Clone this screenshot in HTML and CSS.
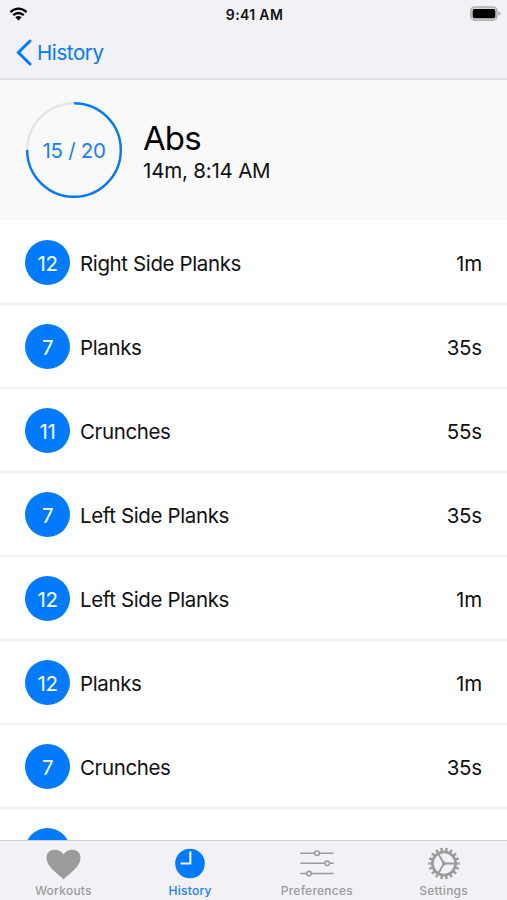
FILE: index.html
```
<!DOCTYPE html>
<html lang="en">
<head>
<meta charset="utf-8">
<title>History</title>
<link rel="stylesheet" href="styles.css">
</head>
<body>
<div class="app">
  <header class="top">
    <div class="status">
      <svg class="wifi" width="20" height="15" viewBox="0 0 20 15" fill="none" stroke="#000" stroke-width="2.3"><path d="M1.4 5.1Q9.5-1.8 17.6 5.1"/><path d="M4.2 8.2Q9.5 3.8 14.8 8.2"/><path d="M6.3 10.2Q9.5 7.6 12.7 10.2L9.5 13.6Z" fill="#000" stroke="none"/></svg>
      <span class="clock">9:41 AM</span>
      <svg class="battery" width="31" height="16" viewBox="0 0 31 16"><rect x=".9" y="1" width="26" height="13.2" rx="4" fill="#d8d8da" stroke="#b0b0b2" stroke-width="1.6"/><rect x="2.7" y="2.9" width="22.6" height="9.4" rx="1.8"/><path d="M28.4 5.3q4.2 2.3 0 4.6z" fill="#a8a8aa"/></svg>
    </div>
    <nav class="nav">
      <svg width="16" height="27" viewBox="0 0 16 27" fill="none" stroke="#007aff" stroke-width="3" stroke-linecap="round"><path d="M14 2L2.400 13.500L14 25"/></svg>
      <span class="back">History</span>
    </nav>
  </header>
  <section class="summary">
    <div class="ring">
      <svg width="98" height="98" viewBox="0 0 98 98" fill="none" stroke-width="2.4"><circle cx="49" cy="49" r="46.8" stroke="#e5e5e6"/><path d="M49 2.2A46.8 46.8 0 1 1 2.2 49" stroke="#007aff"/></svg>
      <span class="count">15 / 20</span>
    </div>
    <div class="heading">
      <h1 class="title">Abs</h1>
      <p class="meta">14m, 8:14 AM</p>
    </div>
  </section>
  <main class="list">
    <div class="row"><span class="badge">12</span><span class="name">Right Side Planks</span><span class="time">1m</span></div>
    <div class="row"><span class="badge">7</span><span class="name">Planks</span><span class="time">35s</span></div>
    <div class="row"><span class="badge">11</span><span class="name">Crunches</span><span class="time">55s</span></div>
    <div class="row"><span class="badge">7</span><span class="name">Left Side Planks</span><span class="time">35s</span></div>
    <div class="row"><span class="badge">12</span><span class="name">Left Side Planks</span><span class="time">1m</span></div>
    <div class="row"><span class="badge">12</span><span class="name">Planks</span><span class="time">1m</span></div>
    <div class="row"><span class="badge">7</span><span class="name">Crunches</span><span class="time">35s</span></div>
    <div class="row"><span class="badge"></span></div>
  </main>
  <footer class="tabs">
    <div class="tab"><svg width="36" height="36" viewBox="0 0 36 36"><path d="M18.500 33.200C12.500 27.500 1.500 21 1.500 11.800C1.500 6.500 5.300 3.700 9.500 3.700C13.500 3.700 16.800 5.500 18.500 8.200C20.200 5.500 23.500 3.700 27.500 3.700C31.700 3.700 35.500 6.500 35.500 11.800C35.500 21 24.500 27.500 18.500 33.200Z" fill="#9b9b9b"/></svg><span>Workouts</span></div>
    <div class="tab active"><svg width="36" height="36" viewBox="0 0 36 36"><circle cx="18" cy="17.500" r="14.800" fill="#007aff"/><path d="M18.300 5.500V17.500H8.500" fill="none" stroke="#f1f1f6" stroke-width="2.200"/></svg><span>History</span></div>
    <div class="tab"><svg width="36" height="36" viewBox="0 0 36 36" fill="none" stroke="#9b9b9b" stroke-width="1.500"><path d="M1.300 7.200H34.700M1.300 17.300H34.700M1.300 27.500H34.700"/><g fill="#f1f1f6"><circle cx="18" cy="7.200" r="2.300"/><circle cx="28.200" cy="17.300" r="2.300"/><circle cx="10" cy="27.500" r="2.300"/></g></svg><span>Preferences</span></div>
    <div class="tab"><svg width="36" height="36" viewBox="0 0 36 36" fill="none" stroke="#9b9b9b"><circle cx="18" cy="17.500" r="14.200" stroke-width="3" pathLength="36" stroke-dasharray="1 1" stroke-dashoffset=".5"/><circle cx="18" cy="17.500" r="11.600" stroke-width="2.700"/><path d="M18 17.500H29M18 17.500L12.500 8M18 17.500L12.500 27" stroke-width="1.900"/><circle cx="18" cy="17.500" r="2" fill="#9b9b9b" stroke="none"/></svg><span>Settings</span></div>
  </footer>
</div>
</body>
</html>
```
FILE: styles.css
```
* { box-sizing: border-box; }
body { margin: 0; font-family: Inter, "Liberation Sans", sans-serif; color: #111; background: #fff; }
svg { display: block; flex: none; }
.app { height: 900px; display: flex; flex-direction: column; overflow: hidden; }
.top { height: 80px; flex: none; background: #f1f1f6; border-bottom: 2px solid #dfdfe2; }
.status { height: 27px; display: grid; grid-template-columns: 1fr auto 1fr; align-items: center; padding: 0 6px 0 9px; }
.clock { font-size: 14px; font-weight: 600; letter-spacing: .35px; line-height: 27px; padding-top: 1px; margin-right: 1px; }
.battery { justify-self: end; }
.nav { height: 51px; display: flex; align-items: center; padding-left: 16px; gap: 5px; color: #007aff; }
.back { font-size: 20.500px; letter-spacing: -.4px; }
.summary { height: 140px; flex: none; display: flex; align-items: center; padding-left: 25px; gap: 20px; background: #f9f9f9; }
.ring { display: grid; place-items: center; color: #1680f5; }
.ring > * { grid-area: 1 / 1; }
.count { font-size: 20.500px; letter-spacing: -.3px; }
.heading { padding-top: 2px; }
.title { margin: 0; font-size: 33px; line-height: 38px; font-weight: 400; letter-spacing: -.9px; color: #000; }
.meta { margin: 0; font-size: 20.500px; line-height: 27px; letter-spacing: -.2px; }
.list { flex: 1; min-height: 0; overflow: hidden; padding-top: 1px; }
.row { height: 84px; display: flex; align-items: center; padding: 1px 25px 0; border-bottom: 2px solid #f1f1f2; font-size: 20.500px; letter-spacing: -.38px; }
.badge { width: 45px; height: 45px; border-radius: 50%; background: #007aff; color: #fff; display: grid; place-items: center; margin-right: 10px; padding-top: 1px; }
.name { padding-top: 2px; }
.time { margin-left: auto; padding-top: 2px; letter-spacing: -.2px; }
.tabs { height: 60px; flex: none; background: #f1f1f6; border-top: 1px solid #cfcfd3; display: grid; grid-template-columns: repeat(4, 1fr); }
.tab { display: flex; flex-direction: column; align-items: center; padding-top: 5px; color: #9b9b9b; font-size: 12px; font-weight: 500; line-height: 18px; letter-spacing: .25px; }
.active { color: #1680f5; }
```
